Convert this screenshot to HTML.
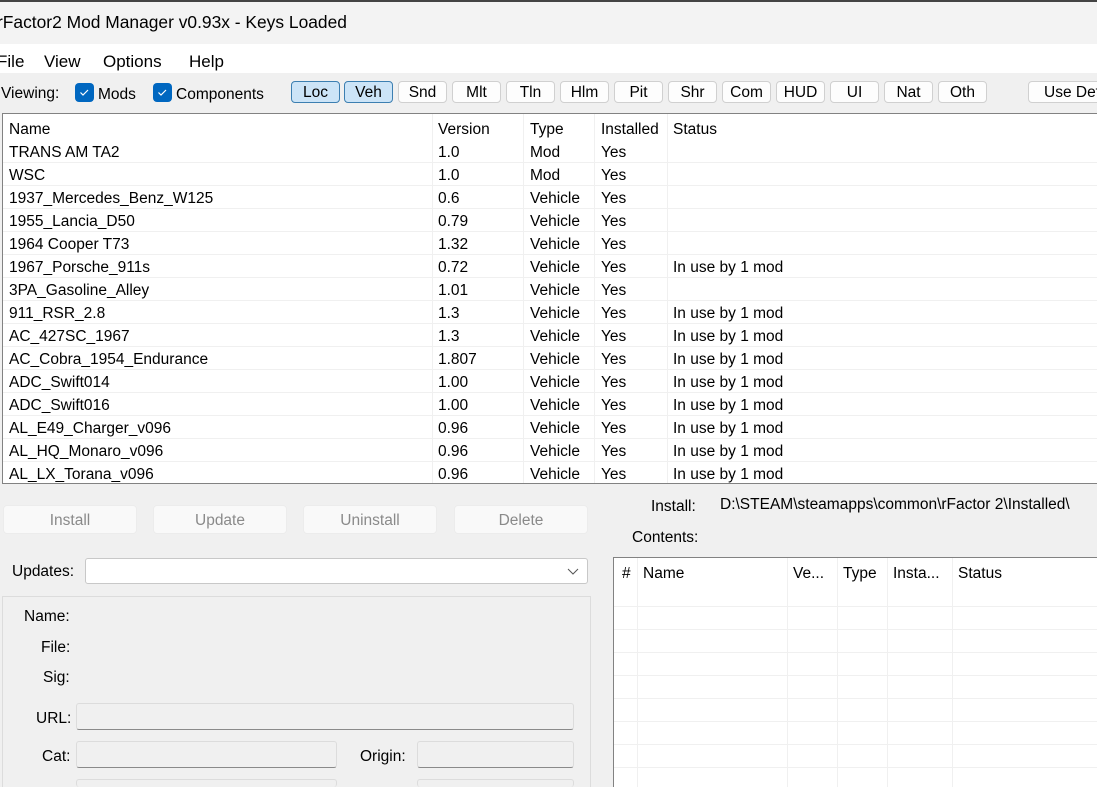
<!DOCTYPE html>
<html><head><style>
*{box-sizing:border-box;margin:0;padding:0}
html{width:1097px;height:787px;overflow:hidden}
body{width:1097px;height:787px;overflow:hidden;background:#f0f0f0;font-family:"Liberation Sans",sans-serif;font-size:15.5px;color:#000;position:relative}
.a{position:absolute;white-space:nowrap}
.btn{position:absolute;height:22px;top:81px;width:49px;border:1px solid #d0d0d0;border-radius:4px;background:#fdfdfd;text-align:center;line-height:22px;font-size:15.5px}
.sel{background:#cce4f7;border-color:#3c7fb1}
.bb{position:absolute;top:505px;height:29px;width:134px;background:#f9f9f9;border:1px solid #ececec;border-radius:4px;text-align:center;line-height:30px;color:#8a8a8a}
.row{position:absolute;left:3px;width:1094px;height:23px;border-bottom:1px solid #f0f0f0}
.row span{position:absolute;top:4px}
.cb{display:inline-block;width:19px;height:19px;background:#0067c0;border-radius:4px;vertical-align:middle;position:relative;margin-right:4px}
.inp{position:absolute;background:#f0f0f0;border:1px solid #dcdcdc;border-bottom:1px solid #8a8a8a;border-radius:3px}
.vl{position:absolute;width:1px;background:#f0f0f0}
.t{margin-top:2px}
</style></head><body>
<div class="a" style="left:0;top:0;width:1097px;height:2px;background:#444"></div>
<div class="a" style="left:0;top:2px;width:1097px;height:42px;background:#f3f3f3"></div>
<div class="a" style="left:-3px;top:12px;font-size:17.4px">rFactor2 Mod Manager v0.93x - Keys Loaded</div>
<div class="a" style="left:0;top:44px;width:1097px;height:29px;background:#fff"></div>
<div class="a" style="left:-3px;top:52px;font-size:17px">File</div>
<div class="a" style="left:44px;top:52px;font-size:17px">View</div>
<div class="a" style="left:103px;top:52px;font-size:17px">Options</div>
<div class="a" style="left:189px;top:52px;font-size:17px">Help</div>
<div class="a" style="left:1px;top:85px">Viewing:</div>
<div class="a" style="left:75px;top:83px"><span class="cb"><svg width="19" height="19" style="position:absolute;left:0;top:0"><path d="M5.5 9.5l2.5 2.5 5-5" stroke="#fff" fill="none" stroke-width="1.2"/></svg></span><span style="position:relative;top:2px">Mods</span></div>
<div class="a" style="left:153px;top:83px"><span class="cb"><svg width="19" height="19" style="position:absolute;left:0;top:0"><path d="M5.5 9.5l2.5 2.5 5-5" stroke="#fff" fill="none" stroke-width="1.2"/></svg></span><span style="position:relative;top:2px">Components</span></div>
<div class="btn sel" style="left:291px">Loc</div>
<div class="btn sel" style="left:344px">Veh</div>
<div class="btn" style="left:398px">Snd</div>
<div class="btn" style="left:452px">Mlt</div>
<div class="btn" style="left:506px">Tln</div>
<div class="btn" style="left:560px">Hlm</div>
<div class="btn" style="left:614px">Pit</div>
<div class="btn" style="left:668px">Shr</div>
<div class="btn" style="left:722px">Com</div>
<div class="btn" style="left:776px">HUD</div>
<div class="btn" style="left:830px">UI</div>
<div class="btn" style="left:884px">Nat</div>
<div class="btn" style="left:938px">Oth</div>
<div class="btn" style="left:1028px;width:90px;text-align:left;padding-left:15px">Use Def</div>

<div class="a" style="left:2px;top:113px;width:1100px;height:371px;background:#fff;border:1px solid #828282"></div>
<div class="vl" style="left:432px;top:114px;height:369px"></div>
<div class="vl" style="left:523px;top:114px;height:369px"></div>
<div class="vl" style="left:594px;top:114px;height:369px"></div>
<div class="vl" style="left:667px;top:114px;height:369px"></div>
<div class="a" style="left:9px;top:121px">Name</div>
<div class="a" style="left:438px;top:121px">Version</div>
<div class="a" style="left:530px;top:121px">Type</div>
<div class="a" style="left:601px;top:121px">Installed</div>
<div class="a" style="left:673px;top:121px">Status</div>
<div class="row" style="top:140px"><span style="left:6px">TRANS AM TA2</span><span style="left:435px">1.0</span><span style="left:527px">Mod</span><span style="left:598px">Yes</span></div>
<div class="row" style="top:163px"><span style="left:6px">WSC</span><span style="left:435px">1.0</span><span style="left:527px">Mod</span><span style="left:598px">Yes</span></div>
<div class="row" style="top:186px"><span style="left:6px">1937_Mercedes_Benz_W125</span><span style="left:435px">0.6</span><span style="left:527px">Vehicle</span><span style="left:598px">Yes</span></div>
<div class="row" style="top:209px"><span style="left:6px">1955_Lancia_D50</span><span style="left:435px">0.79</span><span style="left:527px">Vehicle</span><span style="left:598px">Yes</span></div>
<div class="row" style="top:232px"><span style="left:6px">1964 Cooper T73</span><span style="left:435px">1.32</span><span style="left:527px">Vehicle</span><span style="left:598px">Yes</span></div>
<div class="row" style="top:255px"><span style="left:6px">1967_Porsche_911s</span><span style="left:435px">0.72</span><span style="left:527px">Vehicle</span><span style="left:598px">Yes</span><span style="left:670px">In use by 1 mod</span></div>
<div class="row" style="top:278px"><span style="left:6px">3PA_Gasoline_Alley</span><span style="left:435px">1.01</span><span style="left:527px">Vehicle</span><span style="left:598px">Yes</span></div>
<div class="row" style="top:301px"><span style="left:6px">911_RSR_2.8</span><span style="left:435px">1.3</span><span style="left:527px">Vehicle</span><span style="left:598px">Yes</span><span style="left:670px">In use by 1 mod</span></div>
<div class="row" style="top:324px"><span style="left:6px">AC_427SC_1967</span><span style="left:435px">1.3</span><span style="left:527px">Vehicle</span><span style="left:598px">Yes</span><span style="left:670px">In use by 1 mod</span></div>
<div class="row" style="top:347px"><span style="left:6px">AC_Cobra_1954_Endurance</span><span style="left:435px">1.807</span><span style="left:527px">Vehicle</span><span style="left:598px">Yes</span><span style="left:670px">In use by 1 mod</span></div>
<div class="row" style="top:370px"><span style="left:6px">ADC_Swift014</span><span style="left:435px">1.00</span><span style="left:527px">Vehicle</span><span style="left:598px">Yes</span><span style="left:670px">In use by 1 mod</span></div>
<div class="row" style="top:393px"><span style="left:6px">ADC_Swift016</span><span style="left:435px">1.00</span><span style="left:527px">Vehicle</span><span style="left:598px">Yes</span><span style="left:670px">In use by 1 mod</span></div>
<div class="row" style="top:416px"><span style="left:6px">AL_E49_Charger_v096</span><span style="left:435px">0.96</span><span style="left:527px">Vehicle</span><span style="left:598px">Yes</span><span style="left:670px">In use by 1 mod</span></div>
<div class="row" style="top:439px"><span style="left:6px">AL_HQ_Monaro_v096</span><span style="left:435px">0.96</span><span style="left:527px">Vehicle</span><span style="left:598px">Yes</span><span style="left:670px">In use by 1 mod</span></div>
<div class="row" style="top:462px;height:21px;overflow:hidden;border:0"><span style="left:6px">AL_LX_Torana_v096</span><span style="left:435px">0.96</span><span style="left:527px">Vehicle</span><span style="left:598px">Yes</span><span style="left:670px">In use by 1 mod</span></div>

<div class="bb" style="left:3px">Install</div>
<div class="bb" style="left:153px">Update</div>
<div class="bb" style="left:303px">Uninstall</div>
<div class="bb" style="left:454px">Delete</div>

<div class="a" style="left:12px;top:563px">Updates:</div>
<div class="a" style="left:85px;top:558px;width:503px;height:26px;background:#fff;border:1px solid #c8c8c8;border-radius:3px"><svg width="12" height="8" style="position:absolute;right:8px;top:9px"><path d="M1 1l5 5 5-5" stroke="#555" fill="none"/></svg></div>
<div class="a" style="left:2px;top:596px;width:589px;height:200px;border:1px solid #dcdcdc"></div>
<div class="a" style="left:24px;top:608px">Name:</div>
<div class="a" style="left:41px;top:639px">File:</div>
<div class="a" style="left:43px;top:669px">Sig:</div>
<div class="a" style="left:36px;top:710px">URL:</div>
<div class="inp" style="left:76px;top:703px;width:498px;height:27px"></div>
<div class="a" style="left:42px;top:748px">Cat:</div>
<div class="inp" style="left:76px;top:741px;width:261px;height:27px"></div>
<div class="a" style="left:360px;top:748px">Origin:</div>
<div class="inp" style="left:417px;top:741px;width:157px;height:27px"></div>
<div class="inp" style="left:76px;top:779px;width:261px;height:8px;border-bottom:0"></div>
<div class="inp" style="left:417px;top:779px;width:157px;height:8px;border-bottom:0"></div>

<div class="a" style="left:651px;top:498px">Install:</div>
<div class="a" style="left:720px;top:496px">D:\STEAM\steamapps\common\rFactor 2\Installed\</div>
<div class="a" style="left:632px;top:529px">Contents:</div>
<div class="a" style="left:613px;top:557px;width:490px;height:230px;background:#fff;border:1px solid #828282;border-bottom:0"></div>
<div class="vl" style="left:637px;top:558px;height:229px"></div>
<div class="vl" style="left:787px;top:558px;height:229px"></div>
<div class="vl" style="left:837px;top:558px;height:229px"></div>
<div class="vl" style="left:887px;top:558px;height:229px"></div>
<div class="vl" style="left:952px;top:558px;height:229px"></div>
<div class="a" style="left:622px;top:565px">#</div>
<div class="a" style="left:643px;top:565px">Name</div>
<div class="a" style="left:793px;top:565px">Ve...</div>
<div class="a" style="left:843px;top:565px">Type</div>
<div class="a" style="left:893px;top:565px">Insta...</div>
<div class="a" style="left:958px;top:565px">Status</div>
<div class="a" style="left:614px;top:606px;width:483px;height:1px;background:#f0f0f0"></div>
<div class="a" style="left:614px;top:629px;width:483px;height:1px;background:#f0f0f0"></div>
<div class="a" style="left:614px;top:652px;width:483px;height:1px;background:#f0f0f0"></div>
<div class="a" style="left:614px;top:675px;width:483px;height:1px;background:#f0f0f0"></div>
<div class="a" style="left:614px;top:698px;width:483px;height:1px;background:#f0f0f0"></div>
<div class="a" style="left:614px;top:721px;width:483px;height:1px;background:#f0f0f0"></div>
<div class="a" style="left:614px;top:744px;width:483px;height:1px;background:#f0f0f0"></div>
<div class="a" style="left:614px;top:767px;width:483px;height:1px;background:#f0f0f0"></div>
</body></html>
